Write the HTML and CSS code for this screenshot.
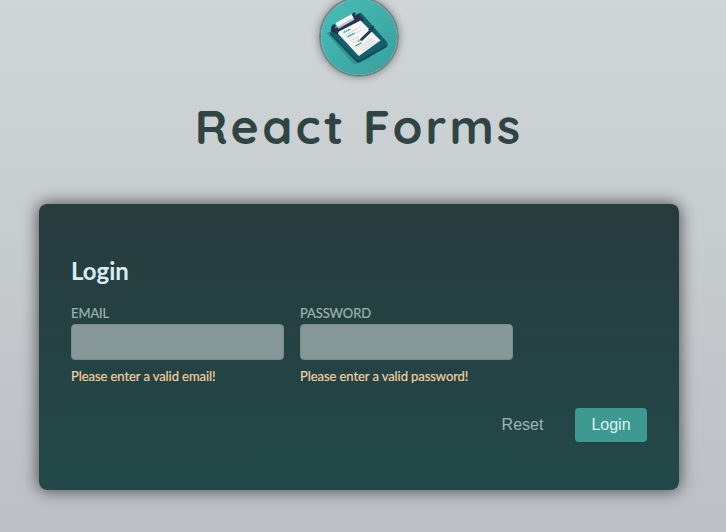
FILE: index.html
```html
<!DOCTYPE html>
<html lang="en">
<head>
  <meta charset="utf-8">
  <title>React Forms</title>
  <link rel="stylesheet" href="styles.css">
</head>
<body>
  <div class="page">
    <header class="header">
      <svg class="logo" viewBox="0 0 76 76" aria-hidden="true">
        <defs>
          <linearGradient id="teal" x1="0" y1="0" x2="1" y2="1">
            <stop offset="0" stop-color="#49bdb9"/>
            <stop offset="1" stop-color="#379f9c"/>
          </linearGradient>
        </defs>
        <rect width="76" height="76" fill="url(#teal)"/>
        <g transform="translate(-2.500 -2)">
          <path d="M8 36 L33 65 Q35 68 38 67 L52 61 L40 25Z" fill="#329491"/>
          <path d="M13 34 L39 17 Q42 15 44 17.500 L68.500 46 Q70 48.500 67.500 50.500 L42 65 Q39 66.500 37 64 L12 38 Q10.500 36 13 34Z" fill="#0e4c5c"/>
          <path d="M13 34 L40 17 Q42 15.500 44 17.500 L68.500 45 Q69.500 47 66.500 49 L42 62.500 Q39 64 37 61.500 L12 36Z" fill="#15606c"/>
          <path d="M14 34 L40.500 17 L46 23.500 L18 37.500Z" fill="#27334c"/>
          <path d="M18.500 35.500 L42 23.500 L62 43.500 L40.300 59Z" fill="#f4f6f5"/>
          <path d="M27 38 L41 30.500 M29.500 40.700 L43 33 M32 44 L40 39.500 M34 46 L39 43 M41 50 L54 42 M42 52 L56 43.500 M43 54 L57 45.500" stroke="#c8cece" stroke-width=".8"/>
          <path d="M25 35.500 L32 32 M29 39.700 L36 36 M37 49 L43 45.800" stroke="#27968c" stroke-width="1.300" stroke-dasharray="2 .4"/>
          <path d="M14.500 32.500 L18 34.500 M34.500 21.500 L37 22.500" stroke="#26324c" stroke-width="4.500" stroke-linecap="round"/>
          <path d="M35 19.500 L35.500 17" stroke="#26324c" stroke-width="3" stroke-linecap="round"/>
          <path d="M14.500 30.500 L15.500 29" stroke="#26324c" stroke-width="3.500" stroke-linecap="round"/>
          <path d="M19 30 L35 21" stroke="#bdc9ce" stroke-width="4"/>
          <path d="M18 27.800 L34 19" stroke="#f4f4f4" stroke-width="4"/>
          <path d="M43 42.500 L53.500 32.500" stroke="#1d4258" stroke-width="2.800" stroke-linecap="round"/>
          <path d="M50 33 L54.500 29.500 L54.500 33.500" fill="none" stroke="#183d50" stroke-width="1.200"/>
          <path d="M38.700 45.500 L40.300 41.800 L42.500 44Z" fill="#ec9a69"/>
        </g>
      </svg>
      <h1 class="title">React Forms</h1>
    </header>

    <form class="card">
      <h2 class="heading">Login</h2>
      <div class="fields">
        <div class="field">
          <label class="label" for="email">EMAIL</label>
          <input class="input" id="email" type="email">
          <p class="error">Please enter a valid email!</p>
        </div>
        <div class="field">
          <label class="label" for="password">PASSWORD</label>
          <input class="input" id="password" type="password">
          <p class="error">Please enter a valid password!</p>
        </div>
      </div>
      <div class="actions">
        <button class="button button-flat" type="reset">Reset</button>
        <button class="button" type="button">Login</button>
      </div>
    </form>
  </div>
</body>
</html>
```
FILE: styles.css
```css
* { box-sizing: border-box; }
html { height: 100%; overflow: hidden; }
body {
  margin: 0;
  height: 100%;
  overflow: hidden;
  font-family: Lato, sans-serif;
  background: linear-gradient(180deg, #d0d5d8 0%, #c7cccf 45%, #bcbfc4 100%);
}
.page {
  display: flow-root;
  width: 718px;
}
.header {
  display: flex;
  flex-direction: column;
  align-items: center;
  margin-top: -3px;
  height: 207px;
}
.logo {
  display: block;
  flex: none;
  width: 80px;
  height: 80px;
  border: 2px solid #6f8584;
  border-radius: 50%;
  box-shadow: 0 0 8px rgba(0, 0, 0, .4);
}
.title {
  margin: 19px 0 0;
  font-family: Quicksand, Lato, sans-serif;
  font-size: 48px;
  line-height: 60px;
  font-weight: 700;
  letter-spacing: 3.15px;
  white-space: nowrap;
  color: #2f4443;
}
.card {
  width: 640px;
  height: 286px;
  margin: 0 auto;
  padding: 52px 32px 48px;
  border-radius: 8px;
  background: linear-gradient(180deg, #283b3d, #224949);
  box-shadow: 0 0 16px 1px rgba(0, 0, 0, .6);
}
.heading {
  margin: 0;
  font-size: 24px;
  line-height: 29px;
  color: #d9ecf5;
}
.fields {
  display: flex;
  gap: 16px;
  margin-top: 19px;
}
.field { width: 213px; }
.label {
  display: block;
  font-size: 13px;
  line-height: 16px;
  height: 20px;
  padding-top: 1px;
  letter-spacing: -.1px;
  color: #9ab5b0;
  -webkit-text-stroke: .2px #9ab5b0;
}
.input {
  display: block;
  width: 100%;
  height: 36px;
  padding: 8px;
  border: 1px solid #758e8c;
  border-radius: 4px;
  background: #869998;
}
.error {
  margin: 8px 0 0;
  font-size: 13px;
  line-height: 16px;
  letter-spacing: -.07px;
  white-space: nowrap;
  color: #f4cf9f;
  -webkit-text-stroke: .2px #f4cf9f;
}
.actions {
  display: flex;
  justify-content: flex-end;
  gap: 15px;
  margin-top: 24px;
}
.button {
  width: 72px;
  height: 34px;
  padding: 0;
  border: 0;
  border-radius: 4px;
  font: 16px "Liberation Sans", sans-serif;
  color: #d9f3f0;
  background: #3e9a90;
}
.button-flat {
  width: 75px;
  color: #9ab9b3;
  background: transparent;
}
```
